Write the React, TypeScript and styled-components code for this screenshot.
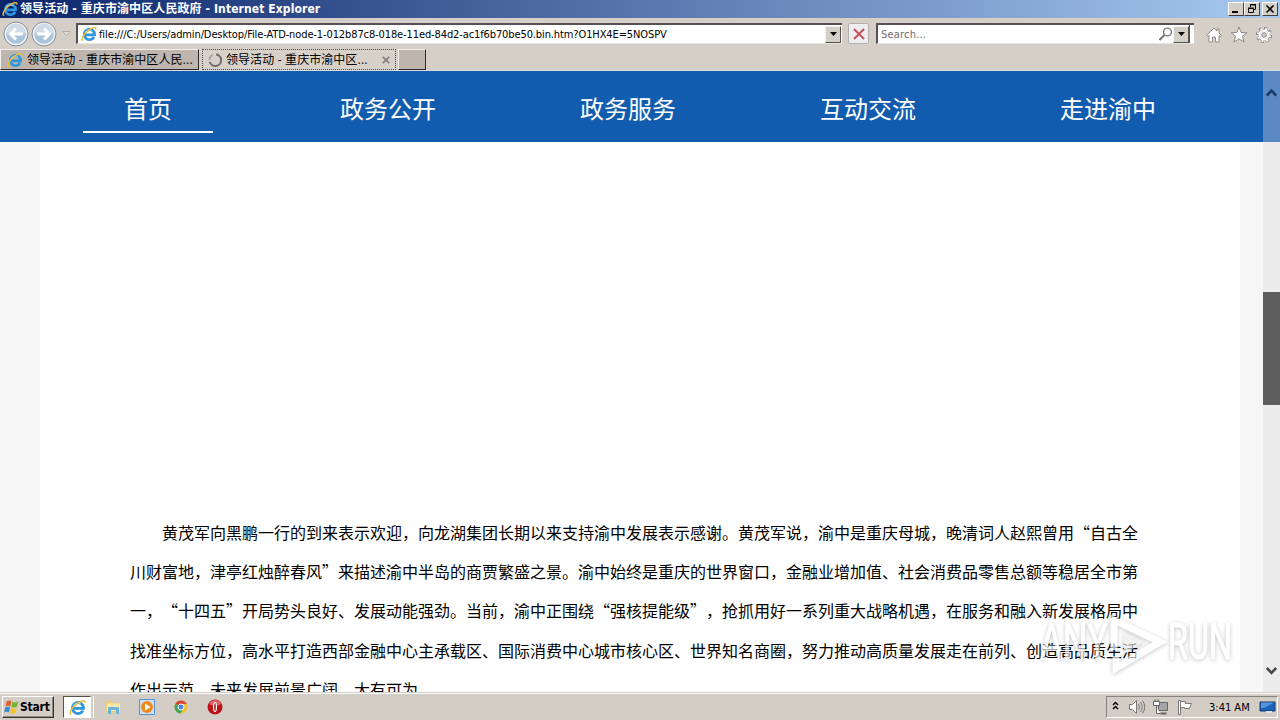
import React from 'react';
import styled, { createGlobalStyle } from 'styled-components';

const GlobalStyle = createGlobalStyle`
  * {
    box-sizing: border-box;
  }
  body {
    margin: 0;
    overflow: hidden;
  }
`;

const uiFont = `'DejaVu Sans Condensed', 'Noto Sans CJK SC', sans-serif`;
const pageFont = `'Noto Sans CJK SC', sans-serif`;

const navItems = ['首页', '政务公开', '政务服务', '互动交流', '走进渝中'];

const articleLines = [
  '黄茂军向黑鹏一行的到来表示欢迎，向龙湖集团长期以来支持渝中发展表示感谢。黄茂军说，渝中是重庆母城，晚清词人赵熙曾用“自古全',
  '川财富地，津亭红烛醉春风”来描述渝中半岛的商贾繁盛之景。渝中始终是重庆的世界窗口，金融业增加值、社会消费品零售总额等稳居全市第',
  '一，“十四五”开局势头良好、发展动能强劲。当前，渝中正围绕“强核提能级”，抢抓用好一系列重大战略机遇，在服务和融入新发展格局中',
  '找准坐标方位，高水平打造西部金融中心主承载区、国际消费中心城市核心区、世界知名商圈，努力推动高质量发展走在前列、创造高品质生活',
  '作出示范，未来发展前景广阔，大有可为。',
];

const IeIcon = ({ size = 16 }: { size?: number }) => (
  <svg width={size} height={size} viewBox="0 0 16 16" fill="none">
    <path
      d="M13 11A5.200 5.200 0 1 1 13.600 8.800H4.400"
      stroke="#2f96de"
      strokeWidth="2.700"
    />
    <path d="M4.200 6.200a4.600 4.600 0 0 1 6.800-1.400" stroke="#8fdcfa" strokeWidth="1" />
    <path
      d="M2.200 14.600C-.4 14 2 8.600 6.300 5.200S15.600.2 14.800 3.600"
      stroke="#edbd3c"
      strokeWidth="1.500"
    />
  </svg>
);

const NavArrow = ({ flip }: { flip?: boolean }) => (
  <svg width="26" height="26" viewBox="0 0 26 26" fill="none">
    <circle cx="13" cy="13" r="12" fill="#b9bec4" stroke="#8c9197" />
    <circle cx="13" cy="13" r="10.500" fill="#a9c3da" stroke="#eef3f7" strokeWidth="1.500" />
    <path d="M3.500 12a9.500 9.500 0 0 1 19 0c-5 2-14 2-19 0z" fill="#cfdce8" />
    <path
      d="M20 13H8M13 7.500 7.500 13l5.500 5.500"
      stroke="#fff"
      strokeWidth="3"
      transform={flip ? 'translate(26 0) scale(-1 1)' : undefined}
    />
  </svg>
);

const Caret = () => (
  <svg width="7" height="4" viewBox="0 0 7 4">
    <path d="M0 0h7L3.500 4z" fill="#000" />
  </svg>
);

const HomeIcon = () => (
  <svg width="18" height="18" viewBox="0 0 18 18">
    <path
      d="M9 2 1.500 9.500l1.300 1L4 9.500V16h3.500v-5h3v5H14V9.500l1.200 1 1.300-1L14 7V3h-2v2z"
      fill="#fff"
      stroke="#8b8b8b"
    />
  </svg>
);

const StarIcon = () => (
  <svg width="18" height="18" viewBox="0 0 18 18">
    <path
      d="m9 1 2.100 5.500 5.900.2-4.600 3.600 1.600 5.700L9 12.800 4 16l1.600-5.700L1 6.700l5.900-.2z"
      fill="#fff"
      stroke="#8b8b8b"
    />
  </svg>
);

const GearIcon = () => (
  <svg width="18" height="18" viewBox="0 0 18 18" fill="none">
    <circle cx="9" cy="9" r="6.600" stroke="#858585" strokeWidth="3" strokeDasharray="2.900 2.280" />
    <circle cx="9" cy="9" r="5" fill="#fff" stroke="#858585" strokeWidth="2" />
    <circle cx="9" cy="9" r="6.200" stroke="#fff" strokeWidth="2" strokeDasharray="1.900 2.970" strokeDashoffset="-.4" />
    <circle cx="9" cy="9" r="4.800" stroke="#fff" strokeWidth="1.500" />
    <circle cx="9" cy="9" r="2.300" fill="#d4d0c8" stroke="#858585" />
  </svg>
);

const Screen = styled.div`
  display: flex;
  flex-direction: column;
  width: 1280px;
  height: 720px;
  overflow: hidden;
  background: #d6cfc8;
  color: #000;
  font-family: ${uiFont};
  font-size: 12px;
`;

const TitleBar = styled.header`
  display: flex;
  align-items: center;
  height: 18px;
  padding: 0 2px;
  background: linear-gradient(90deg, #0a246a, #a6caf0);
  color: #fff;
`;

const Title = styled.h1`
  flex: 1;
  margin: 0 0 0 2px;
  font-size: 12px;
  font-weight: bold;
  line-height: 18px;
  letter-spacing: 0.1px;
  white-space: nowrap;
`;

const WindowButton = styled.button<{ $gap?: boolean }>`
  display: flex;
  align-items: center;
  justify-content: center;
  width: 16px;
  height: 14px;
  margin-left: ${({ $gap }) => ($gap ? '2px' : 0)};
  padding: 0;
  background: #d4d0c8;
  border: 1px solid;
  border-color: #fff #404040 #404040 #fff;
`;

const Toolbar = styled.div`
  display: flex;
  align-items: center;
  height: 31px;
  padding: 0 7px 0 3px;
`;

const HistoryButtons = styled.div`
  display: flex;
  align-items: center;
  gap: 2px;
  width: 73px;

  svg:last-child {
    margin-left: 3px;
  }
`;

const Field = styled.div<{ $width: number }>`
  display: flex;
  align-items: center;
  width: ${({ $width }) => $width}px;
  height: 21px;
  padding: 0 1px 0 3px;
  background: #fff;
  border-top: 2px solid #565057;
  border-left: 2px solid #565057;
  border-bottom: 1px solid #e9e5e0;
`;

const Address = styled.span`
  flex: 1;
  margin-left: 2px;
  font-size: 11px;
  letter-spacing: -0.11px;
  white-space: nowrap;
`;

const SearchText = styled.span`
  flex: 1;
  color: #6d6d6d;
  font-size: 11px;
  letter-spacing: 0.2px;
`;

const DropButton = styled.button`
  display: flex;
  align-items: center;
  justify-content: center;
  width: 16px;
  height: 17px;
  padding: 0;
  background: #d4d0c8;
  border: 1px solid;
  border-color: #f4f2ee #55504c #55504c #f4f2ee;
`;

const StopButton = styled.button`
  display: flex;
  align-items: center;
  justify-content: center;
  width: 21px;
  height: 21px;
  margin: 0 7px 0 6px;
  padding: 0;
  background: #eeedef;
  border: 1px solid #b5b0ae;
  border-radius: 2px;
`;

const Tools = styled.div`
  display: flex;
  gap: 7px;
  margin: 3px 0 0 auto;
`;

const TabStrip = styled.div`
  display: flex;
  align-items: flex-start;
  height: 22px;
  border-bottom: 1px solid #d5dfe5;
`;

const Tab = styled.div<{ $width: number; $active?: boolean }>`
  display: flex;
  align-items: center;
  width: ${({ $width }) => $width}px;
  height: 21px;
  margin-right: ${({ $active }) => ($active ? 2 : 3)}px;
  padding: 0 5px 0 ${({ $active }) => ($active ? 5 : 6)}px;
  background: ${({ $active }) => ($active ? '#d8d1ca' : '#bdb5ae')};
  border: 1px ${({ $active }) => ($active ? 'dotted #4e4a46' : 'solid')};
  ${({ $active }) => !$active && 'border-color: #f4f0ec #2c2928 #2c2928 #f4f0ec;'}
`;

const TabLabel = styled.span`
  flex: 1;
  margin-left: 4px;
  line-height: 18px;
  letter-spacing: 0.05px;
  white-space: nowrap;
`;

const Viewport = styled.main`
  display: flex;
  height: 621px;
  overflow: hidden;
  background: #f6f6f6;
`;

const Page = styled.div`
  width: 1263px;
  font-family: ${pageFont};
`;

const SiteNav = styled.nav`
  display: flex;
  height: 71px;
  padding-left: 28px;
  background: #125cb0;
`;

const SiteNavItem = styled.div`
  display: flex;
  justify-content: center;
  width: 240px;
`;

const SiteNavLabel = styled.span<{ $active: boolean }>`
  width: 130px;
  height: 62px;
  padding-top: 19px;
  color: #fff;
  font-size: 24px;
  line-height: 36px;
  text-align: center;
  border-bottom: 2px solid ${({ $active }) => ($active ? '#fff' : 'transparent')};
`;

const Article = styled.article`
  width: 1200px;
  height: 550px;
  margin-left: 40px;
  padding: 371px 0 0 90px;
  background: #fff;
  overflow: hidden;
`;

const ArticleLine = styled.div<{ $indent: boolean }>`
  height: 39.2px;
  padding-left: ${({ $indent }) => ($indent ? '2em' : 0)};
  font-size: 16px;
  line-height: 39px;
  white-space: nowrap;
  text-spacing-trim: space-all;
`;

const ScrollTrack = styled.div`
  display: flex;
  flex-direction: column;
  align-items: center;
  width: 17px;
  background: linear-gradient(#5b8ac3 71px, #ececec 71px);
`;

const ScrollArrow = styled.div`
  display: flex;
  align-items: center;
  height: 43px;
`;

const ScrollThumb = styled.div`
  width: 17px;
  height: 113px;
  margin: 178px 0 auto;
  background: #5e5e5e;
`;

const Taskbar = styled.footer`
  display: flex;
  align-items: center;
  height: 28px;
  padding: 1px 2px 0;
  background: #d4cdc6;
  border-top: 1px solid #d0cdc8;
  box-shadow: inset 0 1px #fff;
`;

const StartButton = styled.button`
  display: flex;
  align-items: center;
  width: 52px;
  height: 22px;
  margin-right: 9px;
  padding: 0 1px 1px;
  font: bold 12px ${uiFont};
  letter-spacing: -0.2px;
  background: #d4cdc6;
  border: 1px solid;
  border-color: #fff #35322f #35322f #fff;
  box-shadow: inset -1px -1px #8f8a85;
`;

const TaskButton = styled.div<{ $active?: boolean }>`
  display: flex;
  align-items: center;
  justify-content: center;
  width: ${({ $active }) => ($active ? 28 : 34)}px;
  height: 22px;
  ${({ $active }) =>
    $active &&
    `
    margin-right: 5px;
    background: #fff;
    border: 1px solid;
    border-color: #55504c #fff #fff #55504c;
    box-shadow: 2px 0 #d4cdc6, 3px 0 #fff;
  `}
`;

const Tray = styled.div`
  display: flex;
  align-items: center;
  width: 172px;
  height: 22px;
  margin-left: auto;
  padding: 0 1px 0 5px;
  border: 1px solid;
  border-color: #88837e #fff #fff #88837e;
`;

const Clock = styled.span`
  margin: 0 auto 0 11px;
  font-size: 11px;
  white-space: nowrap;
`;

const Watermark = styled.svg`
  position: absolute;
  left: 1036px;
  top: 608px;
  filter: drop-shadow(0 1px 2px rgba(0, 0, 0, 0.35));
  opacity: 0.65;
`;

const App: React.FunctionComponent = () => (
  <Screen>
    <GlobalStyle />
    <TitleBar>
      <IeIcon />
      <Title>领导活动 - 重庆市渝中区人民政府 - Internet Explorer</Title>
      <WindowButton>
        <svg width="10" height="10" viewBox="0 0 10 10">
          <path d="M1 7h6v2H1z" />
        </svg>
      </WindowButton>
      <WindowButton>
        <svg width="10" height="10" viewBox="0 0 10 10" fill="none" stroke="#000">
          <path d="M3.500 3V.5h5v5H7M3 1h6M1.500 4.500h5v4h-5zM1 4h6" />
        </svg>
      </WindowButton>
      <WindowButton $gap>
        <svg width="10" height="10" viewBox="0 0 10 10" stroke="#000" strokeWidth="1.600">
          <path d="m1.500 1.500 7 7m0-7-7 7" />
        </svg>
      </WindowButton>
    </TitleBar>

    <Toolbar>
      <HistoryButtons>
        <NavArrow />
        <NavArrow flip />
        <svg width="9" height="6" viewBox="0 0 9 6">
          <path d="M.8.500h7.400L4.500 5z" fill="#e3dfda" stroke="#b4afaa" />
        </svg>
      </HistoryButtons>
      <Field $width={766}>
        <IeIcon />
        <Address>
          file:///C:/Users/admin/Desktop/File-ATD-node-1-012b87c8-018e-11ed-84d2-ac1f6b70be50.bin.htm?O1HX4E=5NOSPV
        </Address>
        <DropButton>
          <Caret />
        </DropButton>
      </Field>
      <StopButton>
        <svg width="12" height="12" viewBox="0 0 12 12" strokeWidth="2">
          <path d="m1 1 10 10M11 1 1 11" stroke="#c9525a" />
        </svg>
      </StopButton>
      <Field $width={318}>
        <SearchText>Search...</SearchText>
        <svg width="14" height="14" viewBox="0 0 14 14" fill="none" stroke="#777">
          <circle cx="8.500" cy="5" r="3.900" strokeWidth="1.400" />
          <path d="m5.500 8-5 5" strokeWidth="2" />
        </svg>
        <DropButton>
          <Caret />
        </DropButton>
        <svg width="4" height="18">
          <path d="M.5 0v18" stroke="#565057" />
        </svg>
      </Field>
      <Tools>
        <HomeIcon />
        <StarIcon />
        <GearIcon />
      </Tools>
    </Toolbar>

    <TabStrip>
      <Tab $width={199}>
        <IeIcon />
        <TabLabel>领导活动 - 重庆市渝中区人民...</TabLabel>
      </Tab>
      <Tab $width={194} $active>
        <svg width="14" height="14" viewBox="0 0 12 12" fill="none">
          <path d="M7 1.200a5 5 0 1 1-5.500 6.500" stroke="#6f6f70" strokeWidth="1.800" />
          <path d="M1.200 6A5 5 0 0 1 4 1.600" stroke="#aaa5a1" strokeWidth="1.500" />
        </svg>
        <TabLabel>领导活动 - 重庆市渝中区...</TabLabel>
        <svg width="8" height="8" viewBox="0 0 8 8" stroke="#86817d" strokeWidth="1.800">
          <path d="m.8.800 6.400 6.400m0-6.400L.8 7.200" />
        </svg>
      </Tab>
      <Tab $width={28} />
    </TabStrip>

    <Viewport>
      <Page>
        <SiteNav>
          {navItems.map((item, index) => (
            <SiteNavItem key={item}>
              <SiteNavLabel $active={index === 0}>{item}</SiteNavLabel>
            </SiteNavItem>
          ))}
        </SiteNav>
        <Article lang="zh-CN">
          {articleLines.map((line, index) => (
            <ArticleLine key={line} $indent={index === 0}>
              {line}
            </ArticleLine>
          ))}
        </Article>
      </Page>
      <ScrollTrack>
        <ScrollArrow>
          <svg width="11" height="8" viewBox="0 0 11 8" fill="none" stroke="#163a6b" strokeWidth="2.600">
            <path d="M.8 6.500 5.500 1.700 10.200 6.500" />
          </svg>
        </ScrollArrow>
        <ScrollThumb />
        <ScrollArrow>
          <svg width="11" height="8" viewBox="0 0 11 8" fill="none" stroke="#484848" strokeWidth="2.600">
            <path d="M.8 1 5.500 5.800 10.200 1" />
          </svg>
        </ScrollArrow>
      </ScrollTrack>
    </Viewport>

    <Taskbar>
      <StartButton>
        <svg width="16" height="16" viewBox="0 0 16 16">
          <path d="M2.500 2.500c2-1.300 3.500-1.200 5-.2L6.300 7.500c-1.500-1-3-1-4.800 0z" fill="#e2632b" />
          <path d="M8.500 2.700c1.800 1 3.800 1 6-.3l-1.400 5.200c-2 1.200-4 1.200-5.800.3z" fill="#74b738" />
          <path d="M1.300 8.500c1.600-1 3.200-1 4.800 0l-1.300 5c-1.500-.9-3-.9-4.600 0z" fill="#3a8bd8" />
          <path d="M7 9c1.800.9 3.800.9 5.800-.2l-1.300 5c-2 1.200-4 1.100-5.700.2z" fill="#f3c22e" />
        </svg>
        Start
      </StartButton>
      <TaskButton $active>
        <IeIcon size={17} />
      </TaskButton>
      <TaskButton>
        <svg width="16" height="16" viewBox="0 0 16 16">
          <path d="M1 2h5l1 2h7v10H1z" fill="#e8cf75" />
          <path d="M2 4.500h13V12H2z" fill="#f7e9a8" />
          <path d="M3 15V9.500c0-1 .5-1.500 1.500-1.500h8c1 0 1.500.5 1.500 1.500V15h-3v-4H6v4z" fill="#69b4dc" />
        </svg>
      </TaskButton>
      <TaskButton>
        <svg width="16" height="16" viewBox="0 0 16 16">
          <path d="M.5.500h15v15H.5z" fill="#cfe2f2" stroke="#4f94d4" />
          <circle cx="8" cy="8" r="6" fill="#f08a1c" />
          <path d="M6 4.500 11.500 8 6 11.500z" fill="#fff" />
        </svg>
      </TaskButton>
      <TaskButton>
        <svg width="14" height="14" viewBox="0 0 14 14">
          <circle cx="7" cy="7" r="6.500" fill="#f2c230" />
          <path d="M7 7 1.400 3.700A6.500 6.500 0 0 1 12.800 4H7z" fill="#dc4437" />
          <path d="M1.400 3.700A6.500 6.500 0 0 0 6.500 13.500L9.500 8.500 7 7z" fill="#3aa757" />
          <circle cx="7" cy="7" r="3" fill="#4a86e8" stroke="#fff" />
        </svg>
      </TaskButton>
      <TaskButton>
        <svg width="16" height="16" viewBox="0 0 16 16">
          <circle cx="8" cy="8" r="7.500" fill="#b91418" />
          <path d="M2 5a6.500 6.500 0 0 1 12 0c-3 2-9 2-12 0z" fill="#dc6264" />
          <ellipse cx="8" cy="8" rx="2" ry="5" fill="#fff" />
          <ellipse cx="8" cy="8" rx=".8" ry="4" fill="#a11115" />
        </svg>
      </TaskButton>
      <Tray>
        <svg width="86" height="18" viewBox="0 0 86 18" fill="none">
          <path
            d="m1 8 2.500-2.500L6 8M1 12l2.500-2.500L6 12"
            transform="translate(0 -1)"
            stroke="#000"
            strokeWidth="1.500"
          />
          <g fill="#fff" stroke="#777">
            <path d="M17.500 6.500h3l4-4v13l-4-4h-3z" />
            <path d="M26.500 6q2 3 0 6M28.500 4q3.500 5 0 10M30.500 2.500q4.500 6.500 0 13" fill="none" />
          </g>
          <g stroke="#666">
            <path d="M46.500 4.500h9v8h-9z" fill="#a6a6a6" />
            <path d="M48.500 15.500h6" strokeWidth="2" />
            <path d="M41.500 3.500h6v4h-6zM43 1v3M46 1v3M44.500 8v7.500H48" fill="#fff" />
          </g>
          <path d="M66.500 16.500v-14h2v14zM68.500 3.500h5v2h6l-2 5h-5v-1h-4z" fill="#fff" stroke="#777" />
        </svg>
        <Clock>3:41 AM</Clock>
        <svg width="17" height="14" viewBox="0 0 17 14">
          <path d="M1 2h15v9H1z" fill="#1c62bb" stroke="#15386a" />
          <path d="M2 2.500h13L5 8H2z" fill="#5596da" />
          <path d="M7 11h6v2H7z" fill="#d9e3ee" />
        </svg>
      </Tray>
    </Taskbar>

    <Watermark width="206" height="72" viewBox="0 0 206 72">
      <g fill="#fff" stroke="#fff" fontFamily="Roboto" fontSize="50">
        <text x="4" y="51" textLength="68" lengthAdjust="spacingAndGlyphs">
          ANY
        </text>
        <text x="132" y="51" textLength="64" lengthAdjust="spacingAndGlyphs">
          RUN
        </text>
      </g>
      <path d="M78 42V12l46 22-44 26V48" fill="none" stroke="#fff" strokeWidth="7" />
      <path d="M88 24v22l20-12z" fill="#ececec" />
    </Watermark>
  </Screen>
);

export default App;
